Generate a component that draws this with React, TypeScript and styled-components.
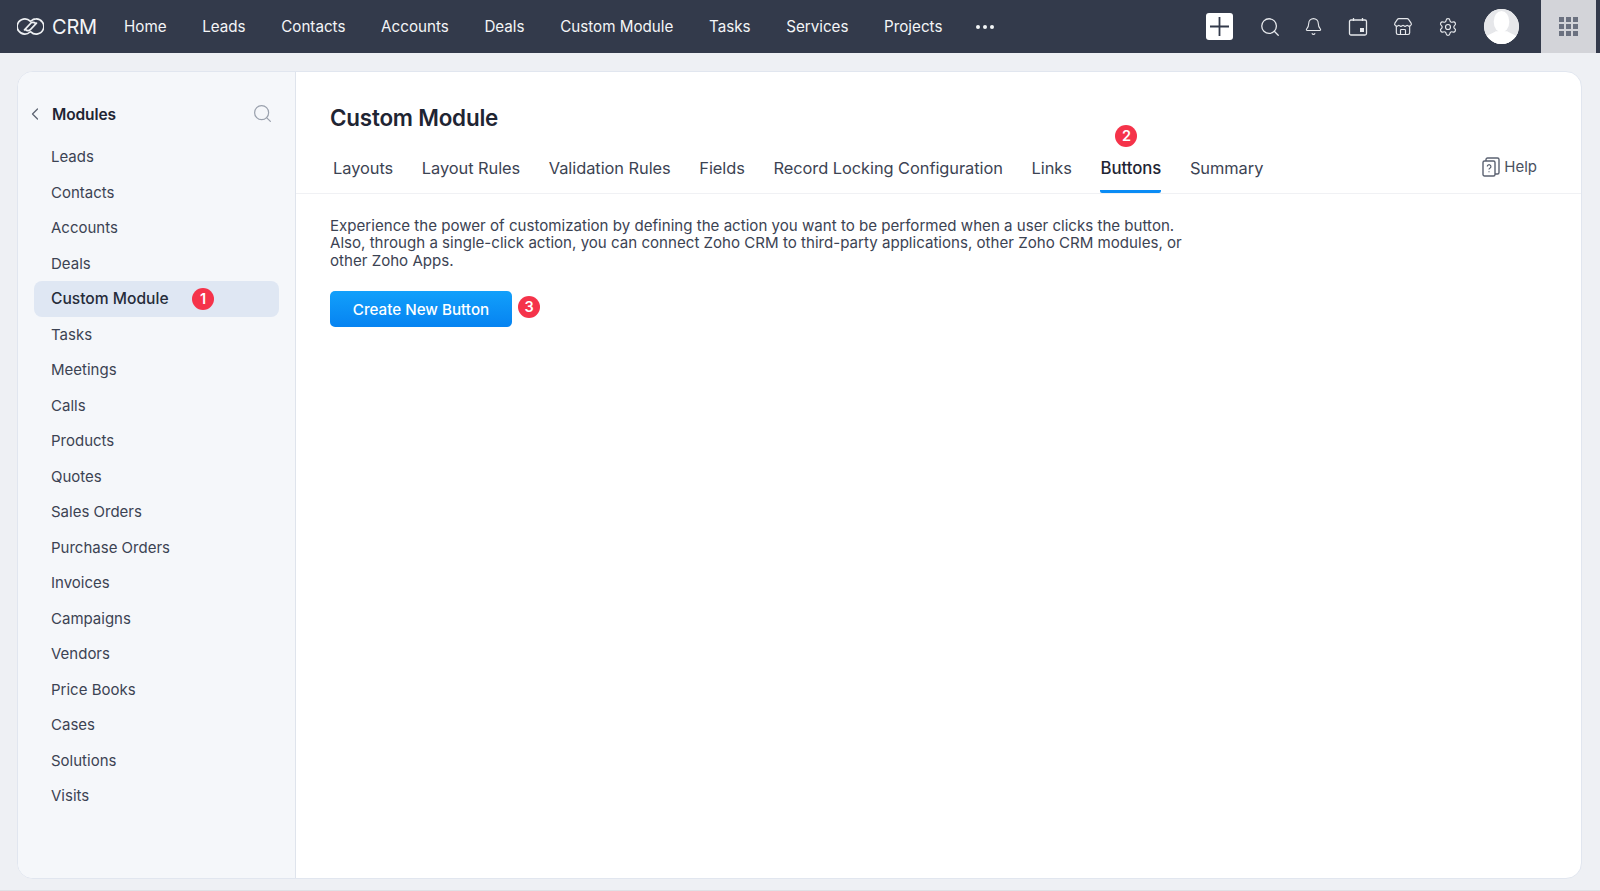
import React from "react";
import styled, { createGlobalStyle } from "styled-components";
import { Bell, ChevronLeft, Search, Settings, Store } from "lucide-react";

const GlobalStyle = createGlobalStyle`
  html, body {
    margin: 0;
    padding: 0;
    height: 100%;
    overflow: hidden;
    background: #eef0f4;
    font-family: Inter, "Liberation Sans", sans-serif;
  }
  * { box-sizing: border-box; }
`;

const Page = styled.div`
  width: 1600px;
  height: 891px;
  display: flex;
  flex-direction: column;
`;

const TopBar = styled.header`
  height: 53px;
  flex: none;
  display: flex;
  align-items: center;
  background: #333a4b;
  color: #f4f5f7;
  padding-left: 17px;
`;

const Brand = styled.div`
  display: flex;
  align-items: center;
  gap: 8px;
  width: 107px;
  font-size: 20px;
  letter-spacing: -0.2px;
`;

const NavList = styled.nav`
  display: flex;
  align-items: center;
  gap: 35.6px;
  font-size: 15.2px;
`;

const NavLink = styled.span`
  white-space: nowrap;
`;

const MoreDots = styled.span`
  display: flex;
  gap: 3px;
  margin-left: -2px;
  span {
    width: 4px;
    height: 4px;
    border-radius: 50%;
    background: #f4f5f7;
  }
`;

const TopActions = styled.div`
  margin-left: auto;
  display: flex;
  align-items: center;
  height: 100%;
`;

const AddButton = styled.div`
  width: 27px;
  height: 27px;
  border-radius: 3px;
  background: #fff;
  display: flex;
  align-items: center;
  justify-content: center;
  margin-right: 26px;
`;

const ActionIcons = styled.div`
  display: flex;
  align-items: center;
  gap: 25px;
  color: #e6e8ec;
  margin-right: 26px;
`;

const TopSearch = styled(Search)`
  margin-right: -2px;
`;

const Avatar = styled.div`
  width: 35px;
  height: 35px;
  border-radius: 50%;
  overflow: hidden;
  background: #fff;
  margin-right: 22px;
`;

const AppsButton = styled.div`
  width: 55px;
  height: 100%;
  background: #d3d4d9;
  display: grid;
  grid-template-columns: repeat(3, 5px);
  grid-auto-rows: 5px;
  gap: 2px;
  align-content: center;
  justify-content: center;
  margin-right: 4px;
  span {
    background: #6b7180;
  }
`;

const Workspace = styled.div`
  flex: 1;
  padding: 18px 18px 11px 17px;
  display: flex;
  min-height: 0;
  border-bottom: 1px solid #dfe1e6;
`;

const Card = styled.main`
  flex: 1;
  display: flex;
  background: #fff;
  border: 1px solid #e1e6ef;
  border-radius: 16px;
  overflow: hidden;
`;

const Sidebar = styled.aside`
  width: 278px;
  flex: none;
  background: #f5f7fa;
  border-right: 1px solid #dfe4ec;
  padding: 29px 16px 0 16px;
`;

const SidebarHead = styled.div`
  display: flex;
  align-items: center;
  height: 26px;
  margin-bottom: 12px;
  color: #1f2533;
`;

const SidebarTitle = styled.h2`
  flex: 1;
  margin: 0 0 0 7px;
  font-size: 15.5px;
  font-weight: 600;
  letter-spacing: -0.1px;
`;

const BackIcon = styled(ChevronLeft)`
  color: #5d6472;
  margin-left: -9px;
`;

const SideSearch = styled(Search)`
  color: #9aa1ad;
  margin-right: 6px;
  margin-top: -2px;
`;

const ModuleRow = styled.div<{ $active?: boolean }>`
  height: 35.5px;
  display: flex;
  align-items: center;
  gap: 23.5px;
  padding-left: 17px;
  border-radius: 8px;
  font-size: ${(p) => (p.$active ? "15.6px" : "15px")};
  color: ${(p) => (p.$active ? "#262c3a" : "#3c4353")};
  font-weight: ${(p) => (p.$active ? 500 : 400)};
  background: ${(p) => (p.$active ? "#dfe7f3" : "transparent")};
`;

const Badge = styled.span`
  width: 22px;
  height: 22px;
  flex: none;
  border-radius: 50%;
  background: #f5334a;
  color: #fff;
  font-size: 14.5px;
  font-weight: 600;
  display: flex;
  align-items: center;
  justify-content: center;
`;

const Content = styled.section`
  flex: 1;
  min-width: 0;
  display: flex;
  flex-direction: column;
`;

const ContentHead = styled.div`
  padding: 31px 44px 0 34px;
  border-bottom: 1px solid #f0f1f4;
`;

const PageTitle = styled.h1`
  margin: 0 0 18px;
  font-size: 22.4px;
  line-height: 30px;
  font-weight: 600;
  letter-spacing: -0.2px;
  color: #1f2533;
`;

const TabRow = styled.div`
  display: flex;
  align-items: flex-start;
  gap: 28.6px;
  padding-left: 3px;
`;

const Tab = styled.div<{ $active?: boolean }>`
  position: relative;
  height: 42px;
  padding-top: 7px;
  font-size: ${(p) => (p.$active ? "16.8px" : "16.4px")};
  line-height: 20px;
  letter-spacing: -0.05px;
  white-space: nowrap;
  color: ${(p) => (p.$active ? "#1f2533" : "#3c4353")};
  font-weight: ${(p) => (p.$active ? 500 : 400)};
  border-bottom: ${(p) => (p.$active ? "3px solid #0a8cf5" : "0")};
  border-radius: ${(p) => (p.$active ? "0 0 2px 2px" : "0")};
`;

const TabBadge = styled(Badge)`
  position: absolute;
  top: -26px;
  left: 15px;
`;

const HelpLink = styled.div`
  margin-left: auto;
  display: flex;
  align-items: center;
  gap: 4px;
  height: 31px;
  font-size: 15px;
  color: #4a5160;
`;

const Body = styled.div`
  padding: 22.5px 34px;
`;

const Intro = styled.p`
  margin: 0 0 21.5px;
  width: 860px;
  font-size: 15.1px;
  line-height: 17.5px;
  color: #3c4353;
`;

const ActionRow = styled.div`
  display: flex;
  align-items: center;
  gap: 6px;
`;

const PrimaryButton = styled.button`
  width: 182px;
  height: 36px;
  border: 0;
  border-radius: 5px;
  background: linear-gradient(#12a0fb, #0683f1);
  color: #fff;
  font-family: inherit;
  font-size: 15.2px;
  font-weight: 500;
  padding: 1px 0 0;
`;

const RaisedBadge = styled(Badge)`
  margin-top: -4px;
`;

const navItems = ["Home", "Leads", "Contacts", "Accounts", "Deals", "Custom Module", "Tasks", "Services", "Projects"];
const modules = [
  "Leads", "Contacts", "Accounts", "Deals", "Custom Module", "Tasks", "Meetings", "Calls", "Products", "Quotes",
  "Sales Orders", "Purchase Orders", "Invoices", "Campaigns", "Vendors", "Price Books", "Cases", "Solutions", "Visits",
];
const tabs = ["Layouts", "Layout Rules", "Validation Rules", "Fields", "Record Locking Configuration", "Links", "Buttons", "Summary"];

const Logo = () => (
  <svg width="27" height="19" viewBox="0 0 27 19" fill="none" stroke="#eef0f3" strokeWidth="1.7" strokeLinecap="round">
    <path d="M13.2 4.2A7.6 7.6 0 1 0 8 17.1C9.8 17.1 11.6 16.3 13 15" />
    <path d="M13.8 14.8A7.6 7.6 0 1 0 19 1.9C17.2 1.9 15.4 2.7 14 4" />
    <path d="M7.5 12.8L13 7A3.6 3.6 0 0 1 18.5 6.4" />
    <path d="M19.5 6.2L14 12A3.6 3.6 0 0 1 8.5 12.6" />
  </svg>
);

const CalendarIcon = () => (
  <svg width="20" height="20" viewBox="0 0 20 20" fill="none" stroke="currentColor" strokeWidth="1.3">
    <rect x="1.5" y="3" width="17" height="15" rx="1.5" />
    <path d="M5.5 1v3M14.5 1v3" />
    <rect x="12" y="11" width="4" height="4" fill="currentColor" stroke="none" />
  </svg>
);

const HelpIcon = () => (
  <svg width="18" height="20" viewBox="0 0 18 20" fill="none" stroke="#5b6271" strokeWidth="1.4">
    <rect x="1" y="4" width="12" height="15" rx="1.5" />
    <path d="M4 4V2.5C4 1.7 4.7 1 5.5 1H15.5C16.3 1 17 1.7 17 2.5V15.5C17 16.3 16.3 17 15.5 17H13" />
    <path d="M5.3 9.5a1.8 1.8 0 1 1 2.8 1.5c-.7.4-1.1.8-1.1 1.5M7 14.3v1" strokeWidth="1.2" />
  </svg>
);

const AvatarImage = () => (
  <svg width="35" height="35" viewBox="0 0 36 36">
    <circle cx="18" cy="18" r="18" fill="#e6e7ea" />
    <ellipse cx="18" cy="13" rx="8" ry="11" fill="#fff" />
    <path d="M0 36V30c4-4 10-5 12-7h12c2 2 8 3 12 7v6Z" fill="#fff" />
  </svg>
);

const App: React.FC = () => (
  <Page>
    <GlobalStyle />
    <TopBar>
      <Brand>
        <Logo />
        CRM
      </Brand>
      <NavList>
        {navItems.map((item) => (
          <NavLink key={item}>{item}</NavLink>
        ))}
        <MoreDots>
          <span />
          <span />
          <span />
        </MoreDots>
      </NavList>
      <TopActions>
        <AddButton>
          <svg width="19" height="19" viewBox="0 0 19 19" stroke="#333a4b" strokeWidth="1.8">
            <path d="M9.5 0v19M0 9.5h19" />
          </svg>
        </AddButton>
        <ActionIcons>
          <TopSearch size={22} strokeWidth={1.4} />
          <Bell size={19} strokeWidth={1.4} />
          <CalendarIcon />
          <Store size={20} strokeWidth={1.4} />
          <Settings size={20} strokeWidth={1.4} />
        </ActionIcons>
        <Avatar>
          <AvatarImage />
        </Avatar>
        <AppsButton>
          {Array.from({ length: 9 }, (_, i) => (
            <span key={i} />
          ))}
        </AppsButton>
      </TopActions>
    </TopBar>
    <Workspace>
      <Card>
        <Sidebar>
          <SidebarHead>
            <BackIcon size={20} strokeWidth={1.5} />
            <SidebarTitle>Modules</SidebarTitle>
            <SideSearch size={21} strokeWidth={1.4} />
          </SidebarHead>
          {modules.map((name) => (
            <ModuleRow key={name} $active={name === "Custom Module"}>
              {name}
              {name === "Custom Module" && <Badge>1</Badge>}
            </ModuleRow>
          ))}
        </Sidebar>
        <Content>
          <ContentHead>
            <PageTitle>Custom Module</PageTitle>
            <TabRow>
              {tabs.map((tab) => (
                <Tab key={tab} $active={tab === "Buttons"}>
                  {tab}
                  {tab === "Buttons" && <TabBadge>2</TabBadge>}
                </Tab>
              ))}
              <HelpLink>
                <HelpIcon />
                Help
              </HelpLink>
            </TabRow>
          </ContentHead>
          <Body>
            <Intro>
              Experience the power of customization by defining the action you want to be performed when a user clicks the button. Also, through a single-click action, you can connect Zoho CRM to third-party applications, other Zoho CRM modules, or other Zoho Apps.
            </Intro>
            <ActionRow>
              <PrimaryButton>Create New Button</PrimaryButton>
              <RaisedBadge>3</RaisedBadge>
            </ActionRow>
          </Body>
        </Content>
      </Card>
    </Workspace>
  </Page>
);

export default App;
